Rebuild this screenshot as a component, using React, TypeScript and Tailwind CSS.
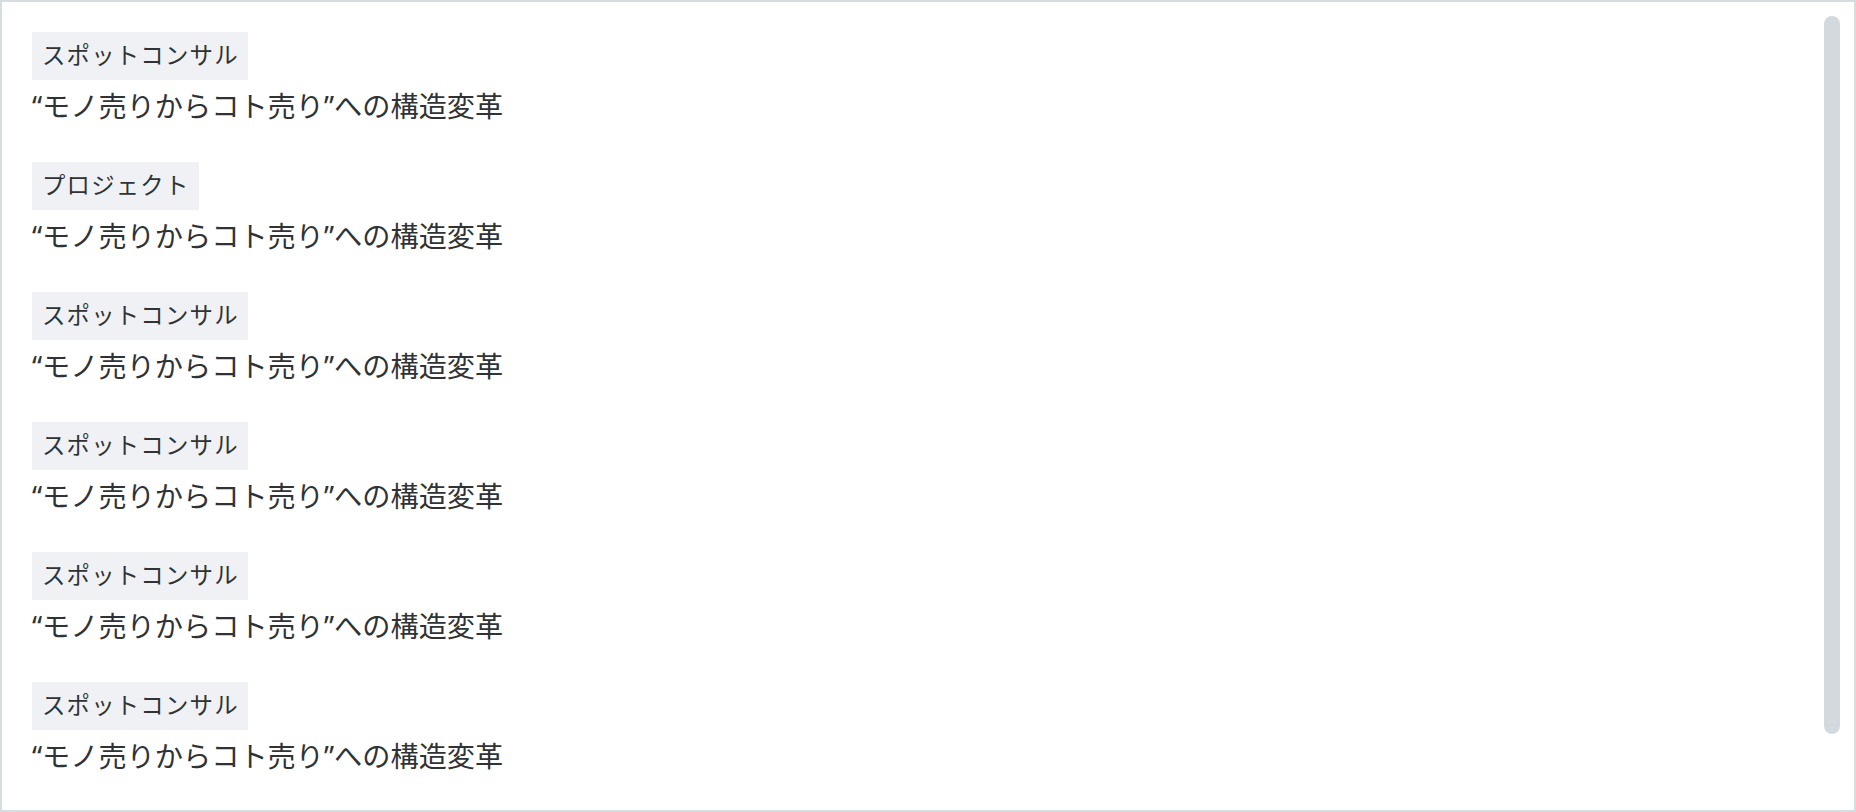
import React from 'react';

const items = [
  { tag: 'スポットコンサル', title: '“モノ売りからコト売り”への構造変革' },
  { tag: 'プロジェクト', title: '“モノ売りからコト売り”への構造変革' },
  { tag: 'スポットコンサル', title: '“モノ売りからコト売り”への構造変革' },
  { tag: 'スポットコンサル', title: '“モノ売りからコト売り”への構造変革' },
  { tag: 'スポットコンサル', title: '“モノ売りからコト売り”への構造変革' },
  { tag: 'スポットコンサル', title: '“モノ売りからコト売り”への構造変革' },
];

export default function App() {
  return (
    <div className="relative h-[812px] w-full overflow-hidden border-2 border-[#d5dde1] bg-white text-[#2f3336] [font-family:'Noto_Sans','Noto_Sans_CJK_JP',sans-serif]">
      <ul className="flex flex-col gap-[34px] px-[30px] pt-[30px]">
        {items.map((it, i) => (
          <li key={i} className="flex flex-col items-start">
            <span className="flex h-[48px] items-center bg-[#f0f1f5] pl-[10px] pr-[9px] text-[23.4px] leading-none tracking-[1.2px]">
              {it.tag}
            </span>
            <p className="mt-[4px] text-[28.2px] leading-[44px]">{it.title}</p>
          </li>
        ))}
      </ul>
      {/* scroll thumb */}
      <div className="absolute right-[14px] top-[14px] h-[718px] w-[16px] rounded-full bg-[#d3dadf]" />
    </div>
  );
}
